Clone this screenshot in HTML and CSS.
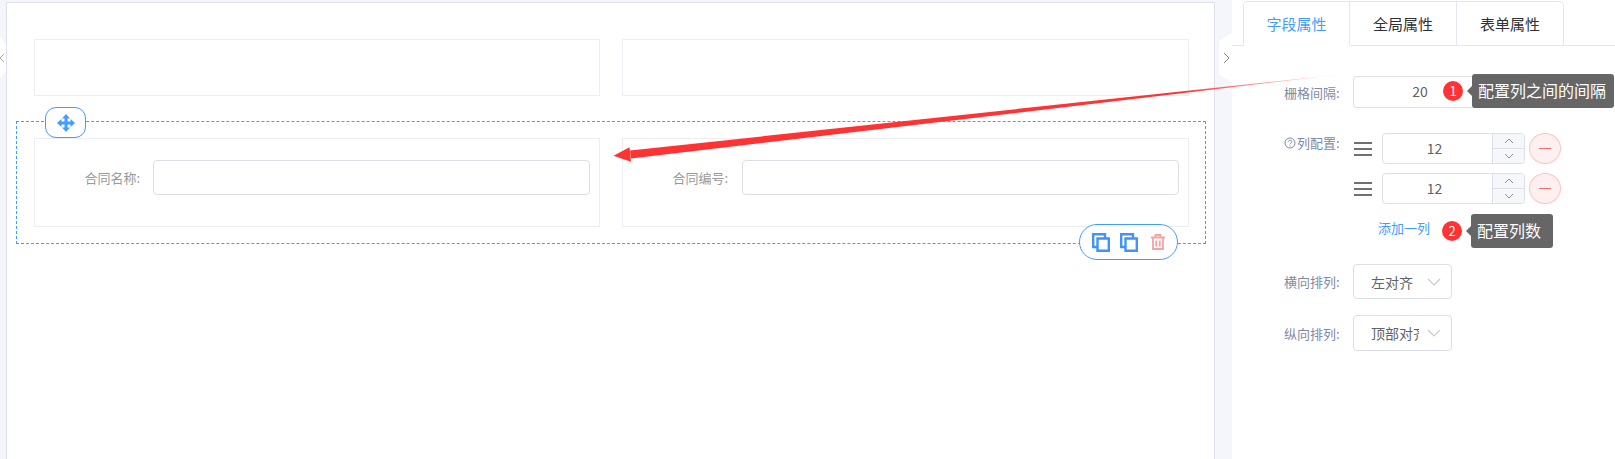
FILE: index.html
```html
<!DOCTYPE html>
<html lang="en">
<head>
    <meta charset="UTF-8">
    <meta name="viewport" content="width=device-width, initial-scale=1.0">
    <title>表单设计</title>
    <link rel="stylesheet" href="styles.css">
</head>
<body>
    <div class="page">
        <div class="handle handle-left">
            <svg width="8" height="12" viewBox="0 0 8 12"><path d="M5 1 L0 6 L5 11" fill="none" stroke="#888" stroke-width="1"/></svg>
        </div>

        <main class="canvas">
            <div class="grid-row plain-row">
                <div class="cell"></div>
                <div class="cell"></div>
            </div>

            <div class="grid-row selected-row">
                <div class="move-btn">
                    <svg width="20" height="20" viewBox="0 0 20 20"><path fill="#409eff" d="M10 1 L14 5.5 H11.5 V8.5 H14.5 V6 L19 10 L14.5 14 V11.5 H11.5 V14.5 H14 L10 19 L6 14.5 H8.5 V11.5 H5.5 V14 L1 10 L5.5 6 V8.5 H8.5 V5.5 H6 Z"/></svg>
                </div>
                <div class="cell form-cell">
                    <label class="cell-label">合同名称:</label>
                    <input class="cell-input" type="text">
                </div>
                <div class="cell form-cell">
                    <label class="cell-label">合同编号:</label>
                    <input class="cell-input" type="text">
                </div>
                <div class="action-btn">
                    <svg width="18" height="19" viewBox="0 0 18 19"><path fill="none" stroke="#3f93fb" stroke-width="2.4" d="M13 5 V1.2 H1.2 V14 H5 M5.5 5.5 H16.8 V17.8 H5.5 Z"/></svg>
                    <svg width="18" height="19" viewBox="0 0 18 19"><path fill="none" stroke="#3f93fb" stroke-width="2.4" d="M13 5 V1.2 H1.2 V14 H5 M5.5 5.5 H16.8 V17.8 H5.5 Z"/></svg>
                    <svg class="trash" width="14" height="16" viewBox="0 0 14 16"><path fill="none" stroke="#f4a3a3" stroke-width="1.8" d="M0 3.5 H14 M4.5 3 V1 H9.5 V3 M2 4 V15 H12 V4 M5.2 6.5 V12.5 M8.8 6.5 V12.5"/></svg>
                </div>
            </div>
        </main>

        <div class="handle handle-right">
            <svg width="8" height="12" viewBox="0 0 8 12"><path d="M2 1 L7 6 L2 11" fill="none" stroke="#888" stroke-width="1"/></svg>
        </div>

        <aside class="panel">
            <div class="tabs">
                <div class="tab active">字段属性</div>
                <div class="tab">全局属性</div>
                <div class="tab">表单属性</div>
            </div>

            <div class="form">
                <div class="form-row gap-row">
                    <label class="form-label">栅格间隔:</label>
                    <div class="num-input wide">
                        <span class="num-value">20</span>
                        <div class="spin">
                            <span class="spin-btn"><svg class="chev" width="10" height="6" viewBox="0 0 10 6"><path d="M1 5 L5 1 L9 5" fill="none" stroke="#8a8f99"/></svg></span>
                            <span class="spin-btn"><svg class="chev" width="10" height="6" viewBox="0 0 10 6"><path d="M1 1 L5 5 L9 1" fill="none" stroke="#8a8f99"/></svg></span>
                        </div>
                    </div>
                </div>

                <div class="form-row col-row">
                    <label class="form-label">
                        <svg class="help" width="12" height="12" viewBox="0 0 12 12"><circle cx="6" cy="6" r="5" fill="none" stroke="#7f8aa5"/><path d="M4.3 4.8 C4.3 2.8 7.8 2.8 7.8 4.7 C7.8 5.9 6 5.9 6 7.3 M6 8.2 V9.3" fill="none" stroke="#7f8aa5"/></svg>列配置:
                    </label>
                    <div class="col-list">
                        <div class="col-item">
                            <div class="drag"><i></i><i></i><i></i></div>
                            <div class="num-input">
                                <span class="num-value">12</span>
                                <div class="spin">
                                    <span class="spin-btn"><svg class="chev" width="10" height="6" viewBox="0 0 10 6"><path d="M1 5 L5 1 L9 5" fill="none" stroke="#8a8f99"/></svg></span>
                                    <span class="spin-btn"><svg class="chev" width="10" height="6" viewBox="0 0 10 6"><path d="M1 1 L5 5 L9 1" fill="none" stroke="#8a8f99"/></svg></span>
                                </div>
                            </div>
                            <div class="minus"><i></i></div>
                        </div>
                        <div class="col-item">
                            <div class="drag"><i></i><i></i><i></i></div>
                            <div class="num-input">
                                <span class="num-value">12</span>
                                <div class="spin">
                                    <span class="spin-btn"><svg class="chev" width="10" height="6" viewBox="0 0 10 6"><path d="M1 5 L5 1 L9 5" fill="none" stroke="#8a8f99"/></svg></span>
                                    <span class="spin-btn"><svg class="chev" width="10" height="6" viewBox="0 0 10 6"><path d="M1 1 L5 5 L9 1" fill="none" stroke="#8a8f99"/></svg></span>
                                </div>
                            </div>
                            <div class="minus"><i></i></div>
                        </div>
                        <a class="add-col">添加一列</a>
                    </div>
                </div>

                <div class="form-row select-row">
                    <label class="form-label">横向排列:</label>
                    <div class="select">
                        <span class="select-text">左对齐</span>
                        <svg width="14" height="8" viewBox="0 0 14 8"><path d="M1 1 L7 7 L13 1" fill="none" stroke="#c6cad3" stroke-width="1.2"/></svg>
                    </div>
                </div>

                <div class="form-row select-row">
                    <label class="form-label">纵向排列:</label>
                    <div class="select">
                        <span class="select-text">顶部对齐</span>
                        <svg width="14" height="8" viewBox="0 0 14 8"><path d="M1 1 L7 7 L13 1" fill="none" stroke="#c6cad3" stroke-width="1.2"/></svg>
                    </div>
                </div>
            </div>
        </aside>

        <!-- annotations drawn over the screenshot -->
        <svg class="arrow" width="1615" height="459" viewBox="0 0 1615 459">
            <defs>
                <linearGradient id="fade" x1="1353" y1="73" x2="1180" y2="92" gradientUnits="userSpaceOnUse">
                    <stop offset="0" stop-color="#ff3333" stop-opacity="0"/>
                    <stop offset="1" stop-color="#ff3333"/>
                </linearGradient>
            </defs>
            <polygon fill="url(#fade)" points="1353,73 630,150.5 631,158.5"/>
            <polygon fill="#ff3333" points="613.5,155.7 629.5,147.3 631,161.7"/>
        </svg>

        <span class="badge badge-one">1</span>
        <div class="tip tip-one">配置列之间的间隔</div>
        <span class="badge badge-two">2</span>
        <div class="tip tip-two">配置列数</div>
    </div>
</body>
</html>
```

FILE: styles.css
```css
* { box-sizing: border-box; }
html, body { margin: 0; padding: 0; }
body { font-family: "Noto Sans CJK SC", "Liberation Sans", sans-serif; background: #f5f6fb; }

.page { position: relative; display: flex; width: 1615px; height: 459px; overflow: hidden; padding-left: 6px; }

/* canvas */
.canvas { width: 1209px; margin-top: 2px; background: #fff; border: 1px solid #dfe0ee; border-bottom: none; padding-top: 36px; flex-shrink: 0; }
.grid-row { display: grid; grid-template-columns: 566px 567px; column-gap: 22px; }
.plain-row { margin-left: 27px; }
.cell { border: 1px solid #ebeef5; height: 57px; }

.selected-row { position: relative; margin: 25px 8px 0 9px; padding: 16px 0 16px 17px; border: 1px dashed #409eff; height: 123px; }
.form-cell { display: flex; height: 89px; padding: 21px 9px 0 0; }
.form-cell + .form-cell .cell-input { margin-left: 14px; }
.cell-label { width: 105px; height: 35px; line-height: 35px; text-align: right; font-size: 13px; color: #999; flex-shrink: 0; }
.cell-input { margin-left: 13px; flex: 1; min-width: 0; height: 35px; border: 1px solid #dcdfe6; border-radius: 4px; background: #fff; outline: none; }

.move-btn { position: absolute; left: 28px; top: -15px; width: 41px; height: 31px; display: flex; align-items: center; justify-content: center; background: #fff; border: 1px solid #409eff; border-radius: 11px; }
.action-btn { position: absolute; right: 27px; bottom: -17px; width: 99px; height: 36px; display: flex; align-items: center; padding-left: 12px; gap: 10px; background: #fff; border: 1px solid #409eff; border-radius: 18px; }
.trash { margin-left: 3px; }

/* side handles */
.handle { position: absolute; background: #fff; display: flex; align-items: center; }
.handle-left { left: 0; top: 37px; width: 6px; height: 41px; clip-path: polygon(0 0, 100% 20%, 100% 80%, 0 100%); justify-content: flex-end; }
.handle-right { left: 1219px; top: 33px; width: 13px; height: 49px; clip-path: polygon(0 15%, 100% 0, 100% 100%, 0 85%); justify-content: center; }

/* right panel */
.panel { margin-left: 17px; flex: 1; background: #fff; }
.tabs { display: flex; height: 46px; padding: 1px 0 0 11px; border-bottom: 1px solid #e4e7ed; }
.tab { width: 107px; height: 45px; line-height: 44px; text-align: center; font-size: 15px; color: #303133; border: 1px solid #e4e7ed; border-left: none; background: #fff; }
.tab:first-child { border-left: 1px solid #e4e7ed; border-top-left-radius: 5px; }
.tab:last-child { border-top-right-radius: 5px; }
.tab.active { color: #409eff; border-bottom-color: #fff; }

.form { padding-left: 52px; }
.form-row { display: flex; }
.form-label { width: 69px; font-size: 13px; color: #7f8aa5; flex-shrink: 0; white-space: nowrap; }
.help { vertical-align: -1px; margin-right: 1px; }

.gap-row { margin-top: 30px; align-items: center; }
.col-row { margin-top: 25px; }
.col-row .form-label { line-height: 20px; }
.select-row { margin-top: 16px; align-items: center; }
.col-row + .select-row { margin-top: 26px; }

.num-input { display: flex; width: 143px; height: 31px; border: 1px solid #dcdfe6; border-radius: 4px; overflow: hidden; background: #fff; font-size: 14px; color: #606266; }
.num-input.wide { width: 172px; height: 32px; }
.num-value { flex: 1; text-align: center; line-height: 28px; padding-right: 6px; }
.spin { width: 32px; display: flex; flex-direction: column; background: #f5f7fa; border-left: 1px solid #dcdfe6; }
.spin-btn { flex: 1; display: flex; align-items: center; justify-content: center; }
.spin-btn + .spin-btn { border-top: 1px solid #dcdfe6; }

.col-list { display: flex; flex-direction: column; }
.col-item { display: flex; align-items: center; height: 31px; margin-bottom: 9px; }
.drag { width: 18px; margin: 0 10px 0 1px; display: flex; flex-direction: column; gap: 4px; }
.drag i { display: block; height: 2px; background: #707070; }
.minus { width: 32px; height: 31px; margin-left: 4px; display: flex; align-items: center; justify-content: center; background: #fef0f0; border: 1px solid #fbc4c4; border-radius: 50%; }
.minus i { display: block; width: 12px; height: 1px; background: #f56c6c; }
.add-col { margin: 5px 0 0 25px; font-size: 13px; line-height: 20px; color: #409eff; }

.select { display: flex; align-items: center; width: 99px; height: 35px; padding-left: 17px; border: 1px solid #dcdfe6; border-radius: 4px; background: #fff; }
.select-row + .select-row .select { height: 36px; }
.select-text { width: 48px; overflow: hidden; white-space: nowrap; font-size: 14px; color: #606266; margin-right: 8px; }

/* annotations */
.arrow { position: absolute; left: 0; top: 0; pointer-events: none; }
.badge { position: absolute; width: 20px; height: 20px; line-height: 20px; text-align: center; border-radius: 50%; background: #f33; color: #fff; font-size: 13px; }
.badge-one { left: 1443px; top: 81px; }
.badge-two { left: 1442px; top: 221px; }
.tip { position: absolute; height: 34px; line-height: 33px; padding-left: 6px; font-size: 16px; color: #fff; background: rgba(85, 85, 85, 0.9); border-radius: 3px; white-space: nowrap; }
.tip::before { content: ""; position: absolute; left: -5px; top: 12px; border-style: solid; border-width: 5px 5px 5px 0; border-color: transparent rgba(85, 85, 85, 0.9) transparent transparent; }
.tip-one { left: 1472px; top: 74px; width: 142px; }
.tip-two { left: 1471px; top: 214px; width: 82px; }
```
